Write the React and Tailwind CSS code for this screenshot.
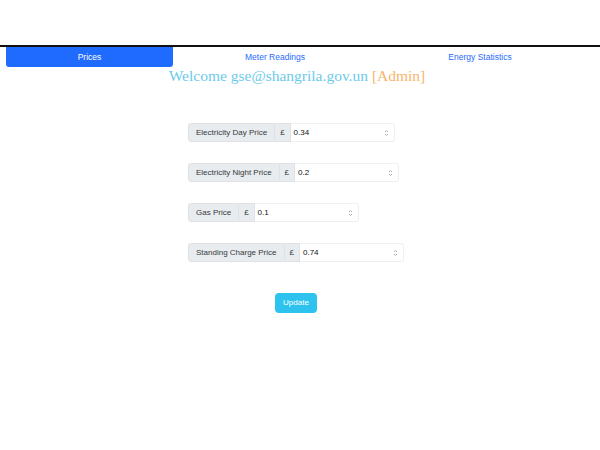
import React, { useState } from 'react';

const fields = [
  { label: 'Electricity Day Price', value: '0.34' },
  { label: 'Electricity Night Price', value: '0.2' },
  { label: 'Gas Price', value: '0.1' },
  { label: 'Standing Charge Price', value: '0.74' },
];

const Spinner = () => (
  <svg width="5" height="8" viewBox="0 0 5 8" className="text-gray-400">
    <path d="M1 3 L2.5 1.5 L4 3" fill="none" stroke="currentColor" strokeWidth="0.8" />
    <path d="M1 5 L2.5 6.5 L4 5" fill="none" stroke="currentColor" strokeWidth="0.8" />
  </svg>
);

const PriceField = ({ label, value }) => (
  <div className="flex h-[19px] text-[8px] font-['Liberation_Sans',sans-serif]">
    <span className="flex items-center px-[7px] bg-[#e9ecef] border border-[#dee2e6] rounded-l-[3px] text-[#343a40]">
      {label}
    </span>
    <span className="flex items-center px-[5px] bg-[#e9ecef] border-y border-r border-[#dee2e6] text-[#343a40]">
      £
    </span>
    <div className="flex items-center justify-between w-[104px] pl-[3px] pr-[5px] bg-white border-y border-r border-[#eef0f2] rounded-r-[3px] text-[#111]">
      <span>{value}</span>
      <Spinner />
    </div>
  </div>
);

const App = () => {
  const [tab, setTab] = useState('Prices');
  const tabs = [
    { name: 'Prices', w: 'w-[167px]' },
    { name: 'Meter Readings', w: 'w-[204px]' },
    { name: 'Energy Statistics', w: 'w-[206px]' },
  ];

  return (
    <div className="w-[600px] h-[450px] bg-white font-['Liberation_Sans',sans-serif]">
      <div className="h-[45px]" />
      <div className="h-[2px] bg-[#111]" />
      <nav className="flex px-[6px] h-[20px]">
        {tabs.map((t) => (
          <button
            key={t.name}
            onClick={() => setTab(t.name)}
            className={`${t.w} flex items-center justify-center text-[8.5px] rounded-b-[3px] ${
              tab === t.name ? 'bg-[#1f6bff] text-white' : 'text-[#1f6bff]'
            }`}
          >
            {t.name}
          </button>
        ))}
      </nav>
      <h1 className="text-center text-[15.5px] leading-[16px] mt-[1px] font-['Liberation_Serif',serif] pr-[6px]">
        <span className="text-[#6ccbea]">Welcome gse@shangrila.gov.un </span>
        <span className="text-[#f8b56c]">[Admin]</span>
      </h1>
      <div className="flex flex-col items-start gap-[21px] pl-[188px] mt-[39px]">
        {fields.map((f) => (
          <PriceField key={f.label} label={f.label} value={f.value} />
        ))}
      </div>
      <div className="flex justify-center mt-[31px] pr-[8px]">
        <button className="w-[42px] h-[20px] rounded-[4px] bg-[#2ec3ee] text-white text-[8px]">
          Update
        </button>
      </div>
    </div>
  );
};

export default App;
